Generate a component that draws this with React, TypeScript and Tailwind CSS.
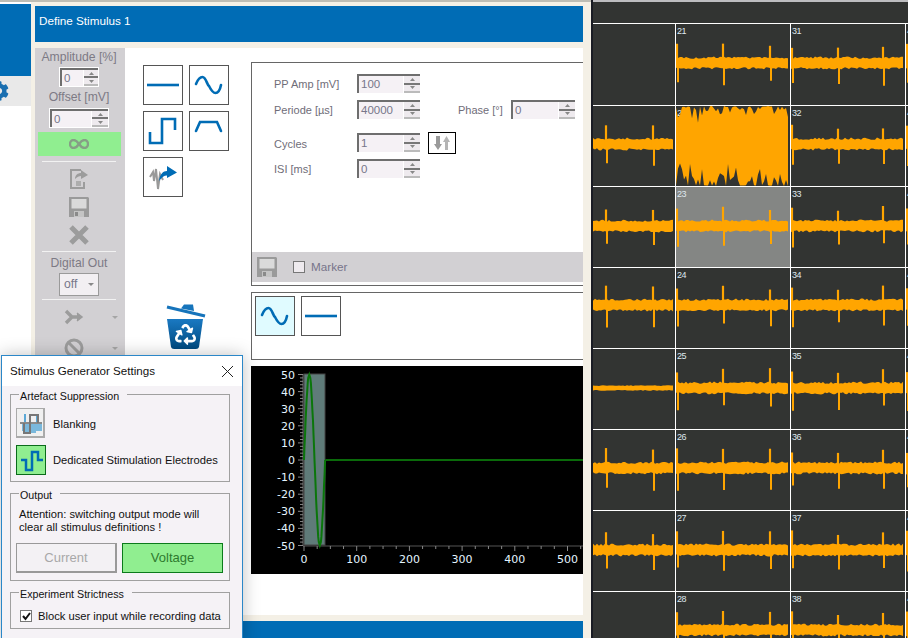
import { FaCog, FaRecycle } from "react-icons/fa";

const BLUE = "#006cb5";

// small seeded generator so the traces stay the same on each load
function rng(seed: number) {
    let s = seed;
    return () => {
        s = (s * 16807) % 2147483647;
        return s / 2147483647;
    };
}

function Trace({ w, seed, center = 39, spikes = [], thin = false }: { w: number; seed: number; center?: number; spikes?: number[]; thin?: boolean }) {
    const r = rng(seed * 7919 + 13);
    const top: string[] = [];
    const bottom: string[] = [];
    for (let x = 0; x <= w; x += 2) {
        const base = thin ? 2 : 4.2;
        const spread = thin ? 0.8 : 2.2;
        top.push(`${x},${(center - base - r() * spread).toFixed(1)}`);
        bottom.unshift(`${x},${(center + base + r() * spread).toFixed(1)}`);
    }
    return (
        <svg width={w} height={80} className="block overflow-hidden blur-[0.3px]">
            <polygon points={[...top, ...bottom].join(" ")} fill="#ffa500" />
            {spikes.map((x, i) => {
                const up = 15 + r() * 5;
                const down = 17 + r() * 6;
                return (
                    <g key={i}>
                        <line x1={x} x2={x} y1={center - up} y2={center + 2} stroke="#ffa500" strokeWidth={2.2} />
                        <line x1={x + 1} x2={x + 1} y1={center - 2} y2={center + down} stroke="#ffa500" strokeWidth={2} />
                    </g>
                );
            })}
        </svg>
    );
}

function NoisyTrace({ w, seed }: { w: number; seed: number }) {
    const r = rng(seed);
    const pts: string[] = [];
    const low: string[] = [];
    for (let x = 0; x <= w; x += 2) {
        const up = r() < 0.5 ? r() * 1.5 : 2 + r() * r() * 20;
        const down = r() < 0.4 ? 79 + r() : 76 - r() * r() * 24;
        pts.push(`${x},${up.toFixed(1)}`);
        low.unshift(`${x},${down.toFixed(1)}`);
    }
    return (
        <svg width={w} height={80} className="relative block blur-[0.2px]">
            <polygon points={[...pts, ...low].join(" ")} fill="#ffa500" />
        </svg>
    );
}

interface Cell {
    label?: string;
    empty?: boolean;
    noisy?: boolean;
    selected?: boolean;
    thin?: boolean;
}

const centers = [39, 38, 39, 37, 39, 38, 39, 38];

const electrodeRows: Cell[][] = [
    [{ empty: true }, { label: "21" }, { label: "31" }, { label: "41" }],
    [{}, { label: "22", noisy: true }, { label: "32" }, { label: "42" }],
    [{}, { label: "23", selected: true }, { label: "33" }, { label: "43" }],
    [{}, { label: "24" }, { label: "34" }, { label: "44" }],
    [{ thin: true }, { label: "25" }, { label: "35" }, { label: "45" }],
    [{}, { label: "26" }, { label: "36" }, { label: "46" }],
    [{}, { label: "27" }, { label: "37" }, { label: "47" }],
    [{ empty: true }, { label: "28" }, { label: "38" }, { label: "48" }],
];

function ElectrodePanel() {
    const widths = ["w-[82px]", "w-[115px]", "w-[115px]", "w-[3px]"];
    const traceW = [80, 113, 113, 3];
    const spikes = [[13, 60], [1, 47, 94], [1, 47, 92], [1]];
    return (
        <div className="h-[638px] w-[315px] overflow-hidden bg-[#323432] font-['Liberation_Sans',sans-serif]">
            <div className="h-[2px] bg-[#bdbdc0]" />
            <div className="h-[21px]" />
            {electrodeRows.map((row, i) => (
                <div key={i} className={`flex border-t border-white ${i === 0 ? "h-[82px]" : "h-[81px]"}`}>
                    {row.map((cell, j) => (
                        <div
                            key={j}
                            className={`relative shrink-0 overflow-hidden ${widths[j]} ${j > 0 ? "border-l border-white" : ""} ${cell.selected ? "bg-[#848684]" : ""}`}
                        >
                            {cell.label && <span className="absolute left-[1px] top-[1px] text-[9px] leading-[12px] tracking-[-0.5px] text-[#dfe8ef]">{cell.label}</span>}
                            {!cell.empty &&
                                (cell.noisy ? (
                                    <NoisyTrace w={113} seed={4242} />
                                ) : (
                                    <Trace w={traceW[j]} seed={i * 10 + j + 3} center={centers[i]} spikes={cell.thin ? [] : spikes[j]} thin={cell.thin} />
                                ))}
                        </div>
                    ))}
                </div>
            ))}
        </div>
    );
}

function Spin({ value, w, h = 19, btn = 17 }: { value: string; w: number; h?: number; btn?: number }) {
    return (
        <div
            className="flex shrink-0 border-t-2 border-l-2 border-[#6e6e6e] bg-[#f5f1f5]"
            style={{ width: w, height: h }}
        >
            <span className="flex-1 pl-[2px] text-[11.5px] leading-[17px] text-[#77778a]">{value}</span>
            <div className="flex flex-col bg-white pl-[1px]" style={{ width: btn }}>
                <div className="flex flex-1 items-center justify-center border-b-2 border-[#777] bg-[#eeeaee]">
                    <svg width="5" height="3"><polygon points="2.5,0 5,3 0,3" fill="#888" /></svg>
                </div>
                <div className="flex flex-1 items-center justify-center border-b-2 border-[#bbb] bg-[#eeeaee]">
                    <svg width="5" height="3"><polygon points="0,0 5,0 2.5,3" fill="#888" /></svg>
                </div>
            </div>
        </div>
    );
}

function IconBox({ children, active = false }: { children: React.ReactNode; active?: boolean }) {
    return (
        <div className={`h-10 w-10 border border-[#555] ${active ? "bg-[#e0fbff]" : "bg-white"}`}>
            <svg className="blur-[0.3px]" width="38" height="38" viewBox="1 1 38 38" fill="none" stroke={BLUE} strokeWidth="2.6">
                {children}
            </svg>
        </div>
    );
}

const FlatWave = () => <path d="M4 20H36" />;
const SineWave = () => <path d="M7 19C9 14 11 12 13.5 12C17 12 18 20 20 21C22 25 24 28 26.5 28C29 28 31 25 32 20" strokeLinecap="round" />;

function SaveIcon({ size = 20 }: { size?: number }) {
    return (
        <svg className="blur-[0.4px]" width={size} height={size} viewBox="0 0 20 20">
            <path d="M0 0H19L20 1V20H0Z" fill="#9a9a9a" />
            <rect x="2.5" y="2" width="15" height="9.5" fill="#dadada" />
            <rect x="5" y="14" width="10" height="6" fill="#c4c4c4" />
            <rect x="6" y="15" width="3" height="4" fill="#8a8a8a" />
        </svg>
    );
}

function Toolbar() {
    const sep = "h-[1px] w-[74px] shrink-0 bg-[#f2f2f2]";
    return (
        <div className="flex w-[90px] shrink-0 flex-col items-center bg-[#d2d0d3] pr-[2px] text-[12.2px] text-[#7d7a85]">
            <div className="mt-[2px] h-[15px] whitespace-nowrap leading-[15px]">Amplitude [%]</div>
            <div className="mt-[2px] border border-white">
                <Spin value="0" w={38} h={18} btn={15} />
            </div>
            <div className="mt-[1px] h-[18px] leading-[18px]">Offset [mV]</div>
            <div className="mt-[2px] border border-white">
                <Spin value="0" w={58} h={18} btn={17} />
            </div>
            <div className="mt-[4px] flex h-6 w-[83px] shrink-0 items-center justify-center bg-[#90ee90]">
                <svg width="20" height="10" viewBox="0 0 20 10" fill="none" stroke="#869f86" strokeWidth="2.4">
                    <path d="M10 5C8 2 6.5 1 4.5 1C2.5 1 1 3 1 5C1 7 2.5 9 4.5 9C6.5 9 8 8 10 5C12 2 13.5 1 15.5 1C17.5 1 19 3 19 5C19 7 17.5 9 15.5 9C13.5 9 12 8 10 5Z" />
                </svg>
            </div>
            <div className={`mt-[5px] ${sep}`} />
            <svg className="mt-[6px] shrink-0 blur-[0.4px]" width="20" height="22" viewBox="0 0 20 22">
                <path d="M1 1H12V3H3V19H14V14H16V21H1Z" fill="#9c9c9c" />
                <path d="M6 11C6 7 9 5 12 5V2L19 7L12 11V8C10 8 8 9 6 11Z" fill="#9c9c9c" />
                <path d="M7 13H12V18H7Z" fill="#adadad" />
            </svg>
            <div className="mt-[7px] shrink-0"><SaveIcon /></div>
            <svg className="mt-[8px] shrink-0 blur-[0.4px]" width="20" height="20" viewBox="0 0 20 20" stroke="#9c9c9c" strokeWidth="5">
                <path d="M2 2L18 18M18 2L2 18" />
            </svg>
            <div className={`mt-[6px] ${sep}`} />
            <div className="mt-[3px] h-[16px] leading-[16px]">Digital Out</div>
            <div className="mt-[2px] flex h-[23px] w-10 shrink-0 items-center justify-between border border-[#9a9a9a] bg-[#f2eff2] pl-[4px] pr-[4px] text-[#77778a]">
                off
                <svg width="6" height="3"><polygon points="0,0 6,0 3,3" fill="#888" /></svg>
            </div>
            <div className={`mt-[3px] ${sep}`} />
            <div className="mt-[9px] flex w-full shrink-0 items-center pl-[29px]">
                <svg className="blur-[0.3px]" width="20" height="16" viewBox="0 0 20 16" fill="none" stroke="#9c9c9c" strokeWidth="3.4">
                    <path d="M2 2L8 8L2 14M8 8H16" />
                    <path d="M13 4L18 8L13 12" fill="#9c9c9c" strokeWidth="1.5" />
                </svg>
                <svg className="ml-[28px]" width="6" height="3"><polygon points="0,0 6,0 3,3" fill="#a5a5a5" /></svg>
            </div>
            <div className="mt-[13px] flex w-full shrink-0 items-center pl-[29px]">
                <svg className="blur-[0.3px]" width="20" height="20" viewBox="0 0 20 20" fill="none" stroke="#9c9c9c" strokeWidth="3">
                    <circle cx="10" cy="10" r="8" />
                    <path d="M4.5 4.5L15.5 15.5" />
                </svg>
                <svg className="ml-[28px]" width="6" height="3"><polygon points="0,0 6,0 3,3" fill="#a5a5a5" /></svg>
            </div>
        </div>
    );
}

function TrashIcon() {
    return (
        <div className="relative ml-[23px] mt-[106px] h-[46px] w-10">
            <svg width="40" height="46" viewBox="0 0 40 46">
                <defs>
                    <linearGradient id="bin" x1="0" y1="0" x2="0" y2="1">
                        <stop offset="0" stopColor="#1a79c2" />
                        <stop offset="1" stopColor="#004a80" />
                    </linearGradient>
                </defs>
                <path d="M1 4L39 13" stroke="#1674bb" strokeWidth="3.2" fill="none" />
                <path d="M15 5.5L18 1.5H27L28 8" fill="#1674bb" />
                <path d="M1 16H37L33 44Q32.5 46 30 46H8Q5.5 46 5 44Z" fill="url(#bin)" />
            </svg>
            <FaRecycle className="absolute left-[9px] top-[21px] text-white" size={21} />
        </div>
    );
}

function ParamPanel() {
    const label = "text-[11px] leading-[21px] text-[#6f6d78]";
    return (
        <div className="flex h-[224px] w-[332px] shrink-0 flex-col border-y border-l border-[#666]">
            <div className="flex-1 pl-[22px] pt-[11px]">
                <div className="flex h-[26px] items-start">
                    <span className={`w-[83px] ${label}`}>PP Amp [mV]</span>
                    <Spin value="100" w={63} />
                </div>
                <div className="flex h-[33px] items-start">
                    <span className={`w-[83px] ${label}`}>Periode [µs]</span>
                    <Spin value="40000" w={63} />
                    <span className={`ml-[38px] w-[53px] ${label}`}>Phase [°]</span>
                    <Spin value="0" w={64} />
                </div>
                <div className="flex h-[26px] items-start">
                    <span className="w-[83px] text-[11px] leading-[23px] text-[#6f6d78]">Cycles</span>
                    <Spin value="1" w={63} />
                    <div className="ml-[8px] mt-[-1px] flex h-[22px] w-[28px] items-center justify-center border border-black bg-white">
                        <svg width="16" height="14" viewBox="0 0 16 14" fill="#9a9a9a">
                            <path d="M2 0H6V8H8L4 14L0 8H2Z" />
                            <path d="M11 14H14V6H16L12.5 0L9 6H11Z" fill="#b5b5b5" />
                        </svg>
                    </div>
                </div>
                <div className="flex h-[20px] items-start">
                    <span className={`w-[83px] ${label}`}>ISI [ms]</span>
                    <Spin value="0" w={63} />
                </div>
            </div>
            <div className="mb-[3px] flex h-[30px] items-center bg-[#d2d0d3] pl-[5px]">
                <SaveIcon />
                <div className="ml-[16px] h-3 w-3 border border-[#777] bg-[#eeeaee]" />
                <span className="ml-[6px] text-[11.7px] text-[#77748a]">Marker</span>
            </div>
        </div>
    );
}

function StimChart() {
    const x0 = 53;
    const y0 = 94;
    const sx = 0.527;
    const sy = 1.71;
    const wave: string[] = [];
    for (let t = 0; t <= 40; t += 1) {
        wave.push(`${(x0 + t * sx).toFixed(1)},${(y0 - Math.round(Math.sin((t / 40) * Math.PI * 2) * 50) * sy).toFixed(1)}`);
    }
    const yLabels = [50, 40, 30, 20, 10, 0, -10, -20, -30, -40, -50];
    const minor: number[] = [];
    for (let v = -50; v <= 50; v += 2) minor.push(v);
    const xTicks: number[] = [];
    for (let v = 0; v <= 525; v += 25) xTicks.push(v);
    return (
        <svg width="332" height="208" className="mt-[6px] block shrink-0 bg-black">
            <rect x={x0} y="8" width="21" height="171" fill="#5f7b79" stroke="#444" />
            <line x1={x0 - 1} x2={x0 - 1} y1="8" y2="180" stroke="#666" />
            <line x1={x0 - 1} x2="332" y1="180" y2="180" stroke="#555" />
            {minor.map((v) => (
                <line key={v} x1={v % 10 === 0 ? x0 - 6 : x0 - 4} x2={x0 - 1} y1={y0 - v * sy} y2={y0 - v * sy} stroke="#888" />
            ))}
            {xTicks.map((v) => (
                <line key={v} x1={x0 + v * sx} x2={x0 + v * sx} y1="180" y2={v % 100 === 0 ? 185 : 183} stroke="#888" />
            ))}
            <polyline points={wave.join(" ")} fill="none" stroke="#0a760a" strokeWidth="2" />
            <line x1={x0 + 40 * sx} x2="332" y1={y0} y2={y0} stroke="#0a6a0a" strokeWidth="2" />
            <g fontFamily="'DejaVu Sans', sans-serif" fontSize="11" fill="#e4f4ff">
                {yLabels.map((v) => (
                    <text key={v} x="44" y={y0 - v * sy + 4} textAnchor="end">{v}</text>
                ))}
                {[0, 100, 200, 300, 400, 500].map((v) => (
                    <text key={v} x={x0 + v * sx} y="197" textAnchor="middle">{v}</text>
                ))}
            </g>
        </svg>
    );
}

function SettingsDialog() {
    const group = "ml-[8px] mr-[12px] border border-[#a0a0a0] px-[5px]";
    const legend = "ml-[3px] translate-y-[2px] pl-[1px] pr-[8px] text-[10.7px] leading-[14px] text-[#111]";
    return (
        <div className="absolute left-[1px] top-[355px] flex h-[290px] w-[242px] flex-col border border-[#2b87c8] bg-[#f5f2f6] text-[11.2px] text-[#111] shadow-[0_0_16px_rgba(0,0,0,0.25)]">
            <div className="flex h-[30px] shrink-0 items-center justify-between bg-white pl-[8px] pr-[9px] text-[11.6px]">
                Stimulus Generator Settings
                <svg width="11" height="11" viewBox="0 0 11 11" stroke="#222"><path d="M0 0L11 11M11 0L0 11" /></svg>
            </div>
            <fieldset className={`mt-[1px] h-[95px] ${group}`}>
                <legend className={legend}>Artefact Suppression</legend>
                <div className="mt-[7px] flex items-center">
                    <div className="flex h-[30px] w-[29px] items-center justify-center border-b-2 border-r-2 border-t border-l border-[#aaa] bg-[#f0f0f0]">
                        <svg width="23" height="23" viewBox="0 0 23 23" fill="none">
                            <path d="M3 12H23V20H17V22H6V20H3Z" fill="#7ab8dc" />
                            <path d="M6 12V3" stroke="#5ba8d5" strokeWidth="2" />
                            <path d="M18 12V3" stroke="#5ba8d5" strokeWidth="2" />
                            <path d="M1 12H23" stroke="#8a8a8a" strokeWidth="2" />
                            <path d="M5 12V22H11V4H19V12" stroke="#777" strokeWidth="2" />
                        </svg>
                    </div>
                    <span className="ml-[8px] pt-[2px]">Blanking</span>
                </div>
                <div className="mt-[7px] flex items-center">
                    <div className="flex h-[30px] w-[30px] items-center justify-center border border-[#0b6b1b] bg-[#90ee90]">
                        <svg width="26" height="26" viewBox="0 0 26 26" fill="none" stroke={BLUE} strokeWidth="2.5">
                            <path d="M3 13H8V23H14V5H20V13H25" />
                        </svg>
                    </div>
                    <span className="ml-[7px] whitespace-nowrap">Dedicated Stimulation Electrodes</span>
                </div>
            </fieldset>
            <fieldset className={`mt-[4px] h-[95px] ${group}`}>
                <legend className={legend}>Output</legend>
                <div className="mt-[8px] whitespace-nowrap pl-[3px] leading-[13px]">
                    Attention: switching output mode will
                    <br />
                    clear all stimulus definitions !
                </div>
                <div className="mt-[9px] flex gap-[5px]">
                    <div className="flex h-[30px] w-[101px] items-center justify-center border-b-2 border-r-2 border-t border-l border-[#999] bg-[#f3f1f4] text-[13px] text-[#a8a8a8]">Current</div>
                    <div className="flex h-[30px] w-[101px] items-center justify-center border border-[#0b7a1b] bg-[#90ee90] text-[13px] text-[#2e7a2e]">Voltage</div>
                </div>
            </fieldset>
            <fieldset className={`mt-[4px] h-[44px] ${group}`}>
                <legend className={legend}>Experiment Strictness</legend>
                <div className="mt-[9px] flex items-center pl-[4px]">
                    <div className="flex h-[12px] w-[12px] shrink-0 items-center justify-center border border-[#777] bg-white">
                        <svg width="9" height="9" viewBox="0 0 9 9" fill="none" stroke="#111" strokeWidth="2"><path d="M1 4L3.5 7L8 1" /></svg>
                    </div>
                    <span className="ml-[6px] whitespace-nowrap">Block user input while recording data</span>
                </div>
            </fieldset>
        </div>
    );
}

export default function App() {
    return (
        <div className="relative flex h-[638px] w-[908px] overflow-hidden bg-white font-['Liberation_Sans',sans-serif]">
            <div className="flex w-[591px] shrink-0 flex-col">
                <div className="h-[2px] shrink-0 bg-[#bdbdb5]" />
                <div className="flex min-h-0 flex-1">
                    <div className="w-[31px] shrink-0 pt-[2px]">
                        <div className="h-[72px] bg-[#006cb5]" />
                        <div className="flex h-[30px] items-center overflow-hidden bg-[#e9e9e9]">
                            <FaCog className="ml-[-11px] shrink-0 text-[#1a6fb0]" size={20} />
                        </div>
                    </div>
                    <div className="flex min-w-0 flex-1 flex-col bg-[#f4f0e6] pl-[4px] pr-[8px]">
                        <div className="mt-[4px] h-9 shrink-0 bg-[#006cb5] pl-[4px] pt-[6px] text-[11.7px] text-white">Define Stimulus 1</div>
                        <div className="mt-[6px] flex min-h-0 flex-1">
                            <Toolbar />
                            <div className="flex min-w-0 flex-1 bg-white">
                                <div className="w-[126px] shrink-0 pl-[18px] pt-[17px]">
                                    <div className="grid w-[86px] grid-cols-[40px_40px] gap-[6px]">
                                        <IconBox><FlatWave /></IconBox>
                                        <IconBox><SineWave /></IconBox>
                                        <IconBox><path d="M7 21V32H19V8H32V19" /></IconBox>
                                        <IconBox><path d="M7 20L11 11H28L32 20" strokeLinecap="round" /></IconBox>
                                        <IconBox>
                                            <path d="M7 20L10 15L11 24L13 12L15 32L17 17L20 23" stroke="#999" strokeWidth="2" />
                                            <path d="M16 24C17 17 20 14 24 14V9L34 15.5L24 21V18.5C21 18.5 19 20 16 24Z" fill={BLUE} stroke="none" />
                                        </IconBox>
                                    </div>
                                    <TrashIcon />
                                </div>
                                <div className="flex min-w-0 flex-1 flex-col overflow-hidden pt-[14px]">
                                    <ParamPanel />
                                    <div className="mt-[6px] flex h-[68px] w-[332px] shrink-0 gap-[6px] border-y border-l border-[#666] pl-[3px] pt-[3px]">
                                        <IconBox active><SineWave /></IconBox>
                                        <IconBox><FlatWave /></IconBox>
                                    </div>
                                    <StimChart />
                                </div>
                            </div>
                        </div>
                        <div className="mt-[6px] h-[17px] shrink-0 bg-[#006cb5]" />
                    </div>
                </div>
            </div>
            <div className="w-[2px] shrink-0 bg-[#1a1c24]" />
            <ElectrodePanel />
            <SettingsDialog />
        </div>
    );
}
